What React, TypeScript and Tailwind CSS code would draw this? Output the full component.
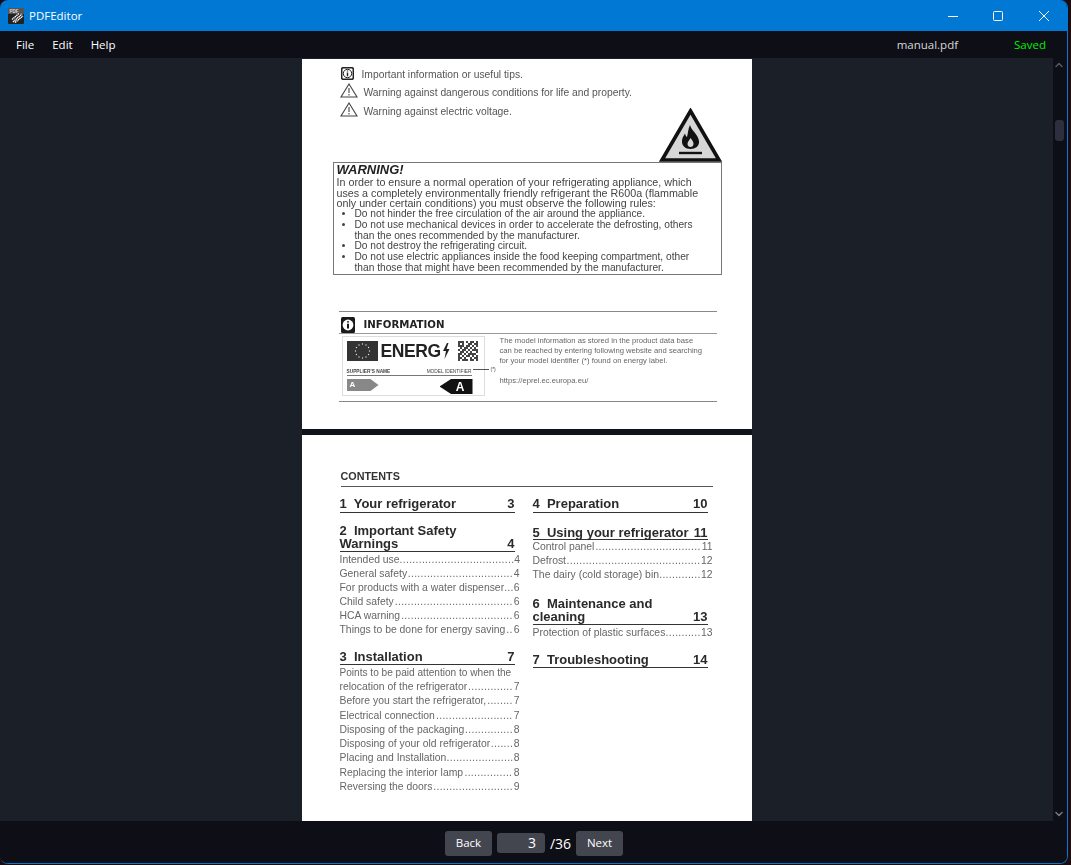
import { ChevronUp, ChevronDown } from "lucide-react";

const Logo = () => (
  <svg width="16" height="16" viewBox="0 0 16 16">
    <rect width="16" height="16" rx="1" fill="#222" />
    <rect width="16" height="6" fill="#555" />
    <text x="1.5" y="5" fontSize="4.5" fontWeight="700" fill="#ddd" fontFamily="Liberation Sans">PDF</text>
    <path d="M5 14 L14 6 M7 14.5 L15 8 M4 11.5 L11 5.5" stroke="#fff" strokeWidth="1.4" strokeDasharray="1.4 0.5" />
  </svg>
);

const InfoBox = () => (
  <svg width="13" height="13" viewBox="0 0 13 13" className="shrink-0">
    <rect x="0.7" y="0.7" width="11.6" height="11.6" rx="1.5" fill="#fff" stroke="#222" strokeWidth="1.5" />
    <circle cx="6.5" cy="6.5" r="4.2" fill="none" stroke="#222" strokeWidth="1" />
    <path d="M6.5 3.6v.9M6.5 5.6v3.6" stroke="#222" strokeWidth="1.4" />
  </svg>
);

const InfoBlack = () => (
  <svg width="14" height="16" viewBox="0 0 14 16" className="shrink-0">
    <rect width="14" height="16" rx="1.5" fill="#1a1a1a" />
    <circle cx="7" cy="8" r="5.4" fill="#fff" />
    <path d="M7 4.300v1.300M7 6.800v4.600" stroke="#1a1a1a" strokeWidth="2" />
  </svg>
);

const Warn = () => (
  <svg width="18" height="15" viewBox="0 0 18 15" className="shrink-0">
    <path d="M9 1 L17 14 H1 Z" fill="none" stroke="#444" strokeWidth="1.1" />
    <path d="M9 5v5M9 11v1.4" stroke="#444" strokeWidth="1.1" />
  </svg>
);

const FlameSign = () => (
  <svg width="63" height="54" viewBox="0 0 63 54" className="block">
    <path d="M31.5 3 L60 52 H3 Z" fill="#d6d6d6" stroke="#111" strokeWidth="3.6" strokeLinejoin="miter" />
    <path
      d="M31 17c1 5 8 9 9 16 .6 5-3.500 8-8.500 8s-9-3-8.500-8.500c.3-3.500 2-5 3-7 .5 2 1 3 2 3.500 1-3.500 1-8 3-12z"
      fill="#111"
    />
    <path d="M31.500 30c2 2.500 3 4 3 6s-1.500 3-3 3-3-1-3-3 1.500-3.500 3-6z" fill="#d6d6d6" />
    <path d="M20 45h23" stroke="#111" strokeWidth="2.4" />
  </svg>
);

const Flag = () => (
  <svg width="31" height="20" viewBox="0 0 31 20" className="shrink-0">
    <rect width="31" height="20" fill="#333" />
    {[0, 30, 60, 90, 120, 150, 180, 210, 240, 270, 300, 330].map((a) => (
      <circle
        key={a}
        cx={15.5 + 7 * Math.cos((a * Math.PI) / 180)}
        cy={10 + 7 * Math.sin((a * Math.PI) / 180)}
        r="0.7"
        fill="#ddd"
      />
    ))}
  </svg>
);

const qrCells = [
  "1110101101", "1010011011", "1110110101", "0101101010", "1011010111",
  "0110101001", "1101011110", "1010110101", "1101001011", "1011101101",
];

const QR = () => (
  <svg width="20" height="20" viewBox="0 0 10 10" className="shrink-0">
    {qrCells.map((row, y) =>
      row.split("").map((c, x) => (c === "1" ? <rect key={`${x}-${y}`} x={x} y={y} width="1" height="1" fill="#444" /> : null))
    )}
  </svg>
);

const Leader = ({ label, page, dots, tall = false }: { label: string; page: string; dots: number; tall?: boolean }) => (
  <div className={`flex w-[180px] items-center justify-between whitespace-nowrap text-[10.4px] leading-none text-[#666] ${tall ? "h-[14.25px]" : "h-[14px]"}`}>
    <span>{label}</span>
    <span className="tracking-[0.3px]">{".".repeat(dots)}</span>
    <span>{page}</span>
  </div>
);

const Heading = ({ lines, page, className = "" }: { lines: string[]; page: string; className?: string }) => (
  <div className={`w-[175px] whitespace-pre border-b border-[#333] text-[13px] font-bold leading-[13px] text-[#2a2a2a] ${className}`}>
    {lines.slice(0, -1).map((l) => (
      <div key={l}>{l}</div>
    ))}
    <div className="flex justify-between">
      <span>{lines[lines.length - 1]}</span>
      <span>{page}</span>
    </div>
  </div>
);

const PageOne = () => (
  <div className="h-[370px] w-[450px] shrink-0 bg-white [font-family:'Liberation_Sans',sans-serif] blur-[0.5px]">
    <div className="h-[49px] pl-[38px] pt-[8px] text-[10.3px] leading-none text-[#555]">
      <div className="flex h-[13px] items-center gap-[8px] pl-[1px]">
        <InfoBox />
        <span className="pt-[4px]">Important information or useful tips.</span>
      </div>
      <div className="mt-[3px] flex items-center gap-[6px]">
        <Warn />
        <span className="pt-[5px]">Warning against dangerous conditions for life and property.</span>
      </div>
      <div className="mt-[4px] flex items-center gap-[6px]">
        <Warn />
        <span className="pt-[5px]">Warning against electric voltage.</span>
      </div>
    </div>
    <div className="flex h-[54px] justify-end pr-[30px]">
      <FlameSign />
    </div>
    <div className="ml-[31px] h-[113px] w-[389px] border border-[#777] px-[3px] text-[10.72px] leading-[10.7px] text-[#444]">
      <div className="pt-[1px] text-[13px] font-bold italic leading-[12px] text-[#222]">WARNING!</div>
      <div className="mt-[1px] whitespace-nowrap">In order to ensure a normal operation of your refrigerating appliance, which</div>
      <div className="whitespace-nowrap">uses a completely environmentally friendly refrigerant the R600a (flammable</div>
      <div className="whitespace-nowrap">only under certain conditions) you must observe the following rules:</div>
      <ul className="list-disc whitespace-nowrap pl-[18px] text-[10.2px]">
        <li>Do not hinder the free circulation of the air around the appliance.</li>
        <li>
          Do not use mechanical devices in order to accelerate the defrosting, others
          <br />
          than the ones recommended by the manufacturer.
        </li>
        <li>Do not destroy the refrigerating circuit.</li>
        <li>
          Do not use electric appliances inside the food keeping compartment, other
          <br />
          than those that might have been recommended by the manufacturer.
        </li>
      </ul>
    </div>
    <div className="ml-[37px] mt-[36px] w-[378px] border-y border-[#888]">
      <div className="flex h-[22px] items-center gap-[9px] border-b border-[#999] pl-[2px] pt-[4px]">
        <InfoBlack />
        <span className="[font-family:'DejaVu_Sans',sans-serif] text-[10.2px] font-bold text-[#222]">INFORMATION</span>
      </div>
      <div className="flex h-[67px] gap-[15px] pl-[3px] pt-[2px]">
        <div className="relative h-[60px] w-[143px] shrink-0 border border-[#ddd] px-[4px] pt-[4px]">
          <div className="flex items-center">
            <Flag />
            <span className="ml-[3px] text-[17.5px] font-bold leading-[20px] tracking-[-0.4px] text-[#222]">ENERG</span>
            <svg width="8" height="16" viewBox="0 0 8 16" className="ml-[1px]">
              <path d="M5 0 L1 8 H4 L2.500 16 L7.500 6 H4.500 L6.500 0 Z" fill="#222" />
            </svg>
            <span className="flex-1" />
            <span className="mr-[2px]"><QR /></span>
          </div>
          <div className="mr-[8px] mt-[8px] flex justify-between border-b border-[#777] pb-[1px] text-[4.8px] leading-[5px] text-[#444]">
            <span className="font-bold">SUPPLIER'S NAME</span>
            <span>MODEL IDENTIFIER</span>
          </div>
          <div className="mt-[3px] flex items-start justify-between pr-[7px]">
            <div className="flex h-[12px] w-[32px] items-center bg-[#888] pl-[3px] text-[8px] font-bold text-white [clip-path:polygon(0_0,75%_0,100%_50%,75%_100%,0_100%)]">
              A
            </div>
            <div className="flex h-[15px] w-[33px] items-center justify-end bg-[#111] pr-[8px] text-[12px] font-bold text-white [clip-path:polygon(35%_0,100%_0,100%_100%,35%_100%,0_50%)]">
              A
            </div>
          </div>
          <div className="absolute left-[130px] top-[29px] flex items-center gap-[2px] text-[5px] text-[#444]">
            <span className="h-px w-[16px] bg-[#555]" />
            <span>(*)</span>
          </div>
        </div>
        <div className="text-[7.65px] leading-[10px] text-[#666]">
          <div className="whitespace-nowrap">The model information as stored in the product data  base</div>
          <div className="whitespace-nowrap">can be reached by entering following website and searching</div>
          <div className="whitespace-nowrap">for your model identifier (*) found on energy label.</div>
          <div className="mt-[10px] whitespace-nowrap">https://eprel.ec.europa.eu/</div>
        </div>
      </div>
    </div>
  </div>
);

const PageTwo = () => (
  <div className="h-[386px] w-[450px] shrink-0 overflow-hidden bg-white pl-[38px] [font-family:'Liberation_Sans',sans-serif] blur-[0.5px]">
    <div className="ml-[1px] mt-[35px] w-[372px] border-b-[1.5px] border-[#555] pb-[4px] text-[10.8px] font-bold leading-[12px] text-[#333]">
      CONTENTS
    </div>
    <div className="mt-[10px] flex">
      <div className="w-[193px] shrink-0">
        <Heading lines={["1  Your refrigerator"]} page="3" className="h-[16px]" />
        <Heading lines={["2  Important Safety", "Warnings"]} page="4" className="mt-[11px] h-[28px]" />
        <div className="mt-[1px]">
          <Leader label="Intended use" page="4" dots={36} />
          <Leader label="General safety" page="4" dots={33} />
          <Leader label="For products with a water dispenser" page="6" dots={3} />
          <Leader label="Child safety" page="6" dots={37} />
          <Leader label="HCA warning" page="6" dots={35} />
          <Leader label="Things to be done for energy saving" page="6" dots={2} />
        </div>
        <Heading lines={["3  Installation"]} page="7" className="mt-[13px] h-[15px]" />
        <div className="mt-[1px]">
          <div className="h-[14.25px] whitespace-nowrap text-[10.1px] leading-[14px] text-[#666]">Points to be paid attention to when the</div>
          <Leader tall label="relocation of the refrigerator" page="7" dots={14} />
          <Leader tall label="Before you start the refrigerator," page="7" dots={8} />
          <Leader tall label="Electrical connection" page="7" dots={24} />
          <Leader tall label="Disposing of the packaging" page="8" dots={15} />
          <Leader tall label="Disposing of your old refrigerator" page="8" dots={7} />
          <Leader tall label="Placing and Installation" page="8" dots={21} />
          <Leader tall label="Replacing the interior lamp" page="8" dots={15} />
          <Leader tall label="Reversing the doors" page="9" dots={25} />
        </div>
      </div>
      <div className="w-[180px] shrink-0">
        <Heading lines={["4  Preparation"]} page="10" className="h-[16px]" />
        <Heading lines={["5  Using your refrigerator"]} page="11" className="mt-[13px] h-[14px]" />
        <div>
          <Leader label="Control panel" page="11" dots={33} />
          <Leader label="Defrost" page="12" dots={42} />
          <Leader label="The dairy (cold storage) bin" page="12" dots={13} />
        </div>
        <Heading lines={["6  Maintenance and", "cleaning"]} page="13" className="mt-[15px] h-[28px]" />
        <div className="mt-[1px]">
          <Leader label="Protection of plastic surfaces" page="13" dots={11} />
        </div>
        <Heading lines={["7  Troubleshooting"]} page="14" className="mt-[13px] h-[15px]" />
      </div>
    </div>
  </div>
);

const App = () => {
  return (
    <div className="h-[865px] w-[1071px] overflow-hidden bg-[#1c0c10] [font-family:'Open_Sans',sans-serif]">
      <div className="flex h-[864px] w-[1068px] flex-col overflow-hidden rounded-lg border-b border-r border-[#0078d4] bg-[#0d0e16]">
        <div className="flex h-[31px] shrink-0 items-center bg-[#0078d4] pl-[8px] text-white">
          <Logo />
          <span className="ml-[5px] text-[11.5px]">PDFEditor</span>
          <div className="ml-auto flex items-center">
            <svg width="10" height="10" viewBox="0 0 10 10" className="mr-[35px]" stroke="currentColor" fill="none">
              <path d="M0 5.500h10" />
            </svg>
            <svg width="10" height="10" viewBox="0 0 10 10" className="mr-[36px]" stroke="currentColor" fill="none">
              <rect x="0.5" y="0.5" width="9" height="9" rx="1" />
            </svg>
            <svg width="10" height="10" viewBox="0 0 10 10" className="mr-[18px]" stroke="currentColor" fill="none">
              <path d="M0 0l10 10M10 0L0 10" />
            </svg>
          </div>
        </div>
        <div className="flex h-[27px] shrink-0 items-center bg-[#0d0e16] pl-[16px] text-[11.5px] text-white">
          <span>File</span>
          <span className="ml-[18px]">Edit</span>
          <span className="ml-[18px]">Help</span>
          <span className="ml-auto text-[#d8d8d8]">manual.pdf</span>
          <span className="ml-[56px] mr-[21px] text-[#00f000]">Saved</span>
        </div>
        <div className="flex h-[763px] shrink-0">
          <div className="flex w-[1053px] shrink-0 flex-col items-center overflow-hidden bg-[#1b1f28] pt-px">
            <div className="flex flex-col items-center gap-[6px] bg-[#10131c]">
              <PageOne />
              <PageTwo />
            </div>
          </div>
          <div className="flex w-[12px] shrink-0 flex-col items-center bg-[#0d0e16]">
            <ChevronUp className="mt-[1px] h-[12px] w-[12px] text-[#555766]" strokeWidth={3} />
            <div className="mt-[49px] h-[21px] w-[9px] rounded-[3px] bg-[#2d2f3f]" />
            <ChevronDown className="mb-[1px] mt-auto h-[12px] w-[12px] text-[#777885]" strokeWidth={3} />
          </div>
        </div>
        <div className="flex flex-1 items-center justify-center gap-[5px] bg-[#0d0e16] pl-[1px] pt-[2px] text-[11.5px] text-white">
          <button className="h-[25px] w-[47px] rounded-[3px] bg-[#44464f]">Back</button>
          <div className="h-[20px] w-[48px] rounded-[3px] bg-[#44464f] pr-[9px] text-right text-[14px] leading-[20px]">3</div>
          <span className="text-[14px]">/36</span>
          <button className="h-[25px] w-[47px] rounded-[3px] bg-[#44464f]">Next</button>
        </div>
      </div>
    </div>
  );
};

export default App;
